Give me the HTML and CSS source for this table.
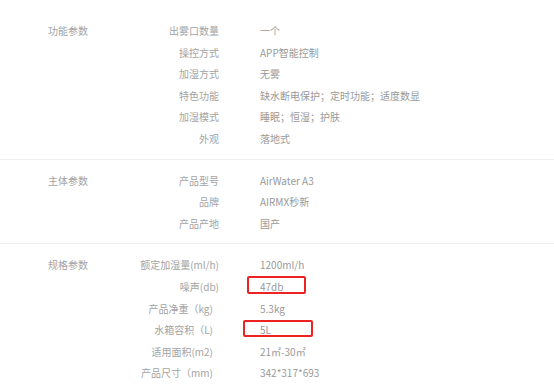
FILE: index.html
```html
<!DOCTYPE html>
<html lang="zh-CN">
<head>
  <meta charset="UTF-8">
  <meta name="viewport" content="width=device-width, initial-scale=1.0">
  <title>规格参数</title>
  <link rel="stylesheet" href="styles.css">
</head>
<body>
  <div class="spec-table">
    <div class="spec-group">
      <div class="group-name">功能参数</div>
      <div class="group-rows">
        <div class="spec-row"><span class="spec-label">出雾口数量</span><span class="spec-value">一个</span></div>
        <div class="spec-row"><span class="spec-label">操控方式</span><span class="spec-value">APP智能控制</span></div>
        <div class="spec-row"><span class="spec-label">加湿方式</span><span class="spec-value">无雾</span></div>
        <div class="spec-row"><span class="spec-label">特色功能</span><span class="spec-value">缺水断电保护；定时功能；适度数显</span></div>
        <div class="spec-row"><span class="spec-label">加湿模式</span><span class="spec-value">睡眠；恒湿；护肤</span></div>
        <div class="spec-row"><span class="spec-label">外观</span><span class="spec-value">落地式</span></div>
      </div>
    </div>

    <div class="spec-group">
      <div class="group-name">主体参数</div>
      <div class="group-rows">
        <div class="spec-row"><span class="spec-label">产品型号</span><span class="spec-value">AirWater A3</span></div>
        <div class="spec-row"><span class="spec-label">品牌</span><span class="spec-value">AIRMX秒新</span></div>
        <div class="spec-row"><span class="spec-label">产品产地</span><span class="spec-value">国产</span></div>
      </div>
    </div>

    <div class="spec-group">
      <div class="group-name">规格参数</div>
      <div class="group-rows">
        <div class="spec-row"><span class="spec-label">额定加湿量(ml/h)</span><span class="spec-value">1200ml/h</span></div>
        <div class="spec-row"><span class="spec-label">噪声(db)</span><span class="spec-value">47db<span class="mark mark-noise"></span></span></div>
        <div class="spec-row"><span class="spec-label indent">产品净重（kg)</span><span class="spec-value">5.3kg</span></div>
        <div class="spec-row"><span class="spec-label indent">水箱容积（L)</span><span class="spec-value">5L<span class="mark mark-tank"></span></span></div>
        <div class="spec-row"><span class="spec-label indent">适用面积(m2)</span><span class="spec-value">21㎡-30㎡</span></div>
        <div class="spec-row"><span class="spec-label indent">产品尺寸（mm)</span><span class="spec-value">342*317*693</span></div>
      </div>
    </div>
  </div>
</body>
</html>
```

FILE: styles.css
```css
body {
  margin: 0;
  background: #fff;
  font-family: "Noto Sans CJK SC", "Microsoft YaHei", sans-serif;
  font-size: 10px;
  color: #a3a3a3;
}

.spec-table {
  padding-top: 10px;
}

.spec-group {
  display: flex;
  padding: 10px 0 9px;
  border-top: 1px solid #eee;
}

.spec-group:first-child {
  border-top: none;
}

.group-name {
  width: 88px;
  padding-left: 48px;
  line-height: 21.6px;
  flex-shrink: 0;
}

.spec-row {
  display: flex;
  height: 21.6px;
  line-height: 21.6px;
}

.spec-label {
  width: 83px;
  text-align: right;
}

.spec-label.indent {
  padding-right: 6px;
  width: 77px;
}

.spec-value {
  position: relative;
  margin-left: 41px;
  color: #999;
}

/* red highlight frames */
.mark {
  position: absolute;
  border: 2px solid #e22;
  border-radius: 2px;
  box-sizing: border-box;
}

.mark-noise {
  left: -13px;
  top: 0;
  width: 59px;
  height: 18px;
}

.mark-tank {
  left: -17px;
  top: 1px;
  width: 70px;
  height: 17px;
}
```
